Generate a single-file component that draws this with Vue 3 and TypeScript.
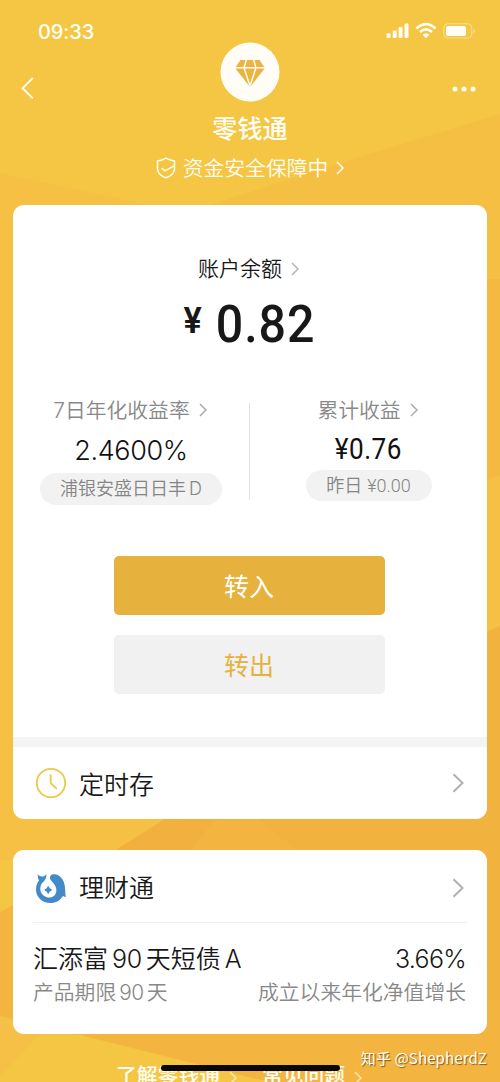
<script setup lang="ts">
interface FooterLink {
  label: string
  cls: string
}

const links: FooterLink[] = [
  { label: '了解零钱通', cls: 'about' },
  { label: '常见问题', cls: 'faq' },
]
</script>

<template>
  <div class="screen">
    <svg class="backdrop" viewBox="0 0 500 1082" aria-hidden="true">
      <rect width="500" height="1082" fill="#f5c644" />
      <path d="M0 173L130 201L250 225V860H0z" fill="#f5c044" />
      <path d="M500 114L350 160L225 200L150 225L250 400H500z" fill="#f4bf43" />
      <path d="M500 279H400V520L500 475z" fill="#f3b941" />
      <path d="M500 475L400 520V700H500z" fill="#f5c044" />
      <path d="M500 626L400 672L165 820L114 851L0 912V1016L80 1035L220 1070L270 1082H500z" fill="#f4b540" />
      <path d="M500 626L400 672L250 812L297 850L420 1000H500z" fill="#f1b23e" />
      <path d="M165 819H215L190 851H114z" fill="#f2b13e" />
      <path d="M0 1016L80 1035H39L0 1077z" fill="#f5c045" />
    </svg>

    <header class="status">
      <span class="time">09:33</span>
      <svg class="status-icons" viewBox="0 0 92 18" fill="#fffef6">
        <rect x="0.5" y="11.2" width="4" height="4.8" rx="1.2" />
        <rect x="6.7" y="8.5" width="4" height="7.5" rx="1.2" />
        <rect x="12.6" y="5" width="4" height="11" rx="1.2" />
        <rect x="18.5" y="1.5" width="4" height="14.5" rx="1.2" />
        <path d="M30.4 6.4Q40 -2.2 49.6 6.4" fill="none" stroke="#fffef6" stroke-width="2.7" />
        <path d="M34 10Q40 4.8 46 10" fill="none" stroke="#fffef6" stroke-width="2.6" />
        <path d="M36.6 12.8Q40 9.8 43.4 12.8L40 16.2z" />
        <rect x="57.8" y="1.8" width="28" height="14.2" rx="4" fill="none" stroke="#fffef6" stroke-opacity=".45" />
        <rect x="60" y="4" width="20" height="10" rx="2" />
        <path d="M87.5 6.5Q90.5 9 87.5 11.5z" opacity=".5" />
      </svg>
    </header>

    <nav class="nav">
      <svg class="back" viewBox="0 0 14 24"><path d="M12.8 2L2.6 12.2L12.8 22.4" /></svg>
      <div class="brand">
        <svg viewBox="0 0 60 60">
          <circle cx="30" cy="30" r="29.5" fill="#fffdf5" />
          <path d="M20.5 18H39.5L45 26L30 45L15 26z" fill="#e8b542" />
          <path d="M14 25.8H46M26.5 17.5L24 25.8L30 44M33.5 17.5L36 25.8L30 44" fill="none" stroke="#fffdf5" stroke-width="1.4" />
        </svg>
      </div>
      <svg class="more" viewBox="0 0 24 6"><circle cx="3" cy="3" r="2.5" /><circle cx="12" cy="3" r="2.5" /><circle cx="21" cy="3" r="2.5" /></svg>
    </nav>

    <h1 class="title">零钱通</h1>
    <div class="safe">
      <svg class="shield" viewBox="0 0 20 22">
        <path d="M10 1.2Q14 3.5 18.5 4V12Q18 18 10 20.8Q2 18 1.5 12V4Q6 3.5 10 1.2z" />
        <path d="M5.8 11.2L9 13.8L18 8.8" />
      </svg>
      <span>资金安全保障中</span>
      <svg class="chev" viewBox="0 0 8 14"><path d="M1 1L7 7L1 13" /></svg>
    </div>

    <main class="card account">
      <div class="balance-label"><span>账户余额</span><svg class="chev" viewBox="0 0 8 14"><path d="M1 1L7 7L1 13" /></svg></div>
      <div class="balance"><span class="yen">¥</span><span class="amount">0.82</span></div>
      <div class="stats">
        <section class="stat rate">
          <div class="stat-label"><span>7日年化收益率</span><svg class="chev" viewBox="0 0 8 14"><path d="M1 1L7 7L1 13" /></svg></div>
          <div class="stat-value">2.4600%</div>
          <div class="pill">浦银安盛日日丰<span class="suffix">D</span></div>
        </section>
        <div class="divider"></div>
        <section class="stat income">
          <div class="stat-label"><span>累计收益</span><svg class="chev" viewBox="0 0 8 14"><path d="M1 1L7 7L1 13" /></svg></div>
          <div class="stat-value">¥0.76</div>
          <div class="pill">昨日 <span class="num">¥0.00</span></div>
        </section>
      </div>
      <div class="actions">
        <button class="btn primary">转入</button>
        <button class="btn secondary">转出</button>
      </div>
      <div class="row timed">
        <svg class="row-icon" viewBox="0 0 32 32">
          <circle cx="16" cy="16" r="14.2" fill="none" stroke="#edc84b" stroke-width="1.8" />
          <path d="M15.7 7.5V16.2L21.8 21.8" fill="none" stroke="#edc84b" stroke-width="1.8" />
        </svg>
        <span>定时存</span>
        <svg class="arrow" viewBox="0 0 12 20"><path d="M1.5 1.2L10.5 10L1.5 18.8" /></svg>
      </div>
    </main>

    <section class="card wealth">
      <div class="row">
        <svg class="row-icon" viewBox="0 0 32 32">
          <path fill="#438bc8" d="M2.7 2.5C4.5 4 6.5 4.7 8 4.5C9.5 4.3 10.6 3.2 11.3 2C11.5 5 10.8 7.5 9 9.3C6.2 11.5 5 14.5 5.3 18C6 22.5 10.3 25.8 15 25.6C19.7 25 22 21 21.2 16.5C20.5 13 18 10.5 15.8 8.2C14.2 6.3 14.8 3.8 17 2.6C23 1 28 6 29.4 12C30.4 16 30 20 30.8 25.2L28 24C25 28.5 21 31 15.5 31C7 31 1 25 1 17.5C1 13.5 2.2 10.7 4 8.5C3 6.8 2.7 4.5 2.7 2.5z" />
          <path fill="#438bc8" d="M13.2 15Q13.8 17.4 16.2 18Q13.8 18.6 13.2 21Q12.6 18.6 10.2 18Q12.6 17.4 13.2 15z" stroke="#438bc8" stroke-width="1.4" stroke-linejoin="round" />
        </svg>
        <span>理财通</span>
        <svg class="arrow" viewBox="0 0 12 20"><path d="M1.5 1.2L10.5 10L1.5 18.8" /></svg>
      </div>
      <div class="fund main"><span class="fund-name">汇添富<i>90</i>天短债<i class="last">A</i></span><span class="pct">3.66%</span></div>
      <div class="fund sub"><span>产品期限<i>90</i>天</span><span>成立以来年化净值增长</span></div>
    </section>

    <footer class="footer">
      <span v-for="link in links" :key="link.cls" :class="['link', link.cls]">{{ link.label }}<svg class="chev" viewBox="0 0 8 14"><path d="M1 1L7 7L1 13" /></svg></span>
    </footer>
    <div class="home-bar"></div>
    <div class="watermark">知乎 @ShepherdZ</div>
  </div>
</template>

<style>
body { margin: 0; overflow: hidden; }
</style>

<style scoped>
* { box-sizing: border-box; }
.screen {
  position: relative;
  width: 500px;
  height: 1082px;
  overflow: hidden;
  display: flex;
  flex-direction: column;
  font-family: Inter, "Noto Sans CJK SC", sans-serif;
  font-weight: 350;
  color: #181818;
  isolation: isolate;
}
.backdrop { position: absolute; inset: 0; width: 500px; height: 1082px; z-index: -1; }
svg { display: block; flex: none; }
i { font-style: normal; }
.status { height: 42px; padding: 22px 22px 0 38px; display: flex; justify-content: space-between; }
.time { font: 500 20px/20px Inter, sans-serif; letter-spacing: -.1px; color: #fffef6; }
.status-icons { width: 92px; height: 18px; }
.nav { height: 61px; padding: 0 24px 0 20px; display: flex; justify-content: space-between; }
.back { width: 14px; height: 24px; margin-top: 34px; }
.back path { fill: none; stroke: #fffef6; stroke-width: 1.9; }
.brand svg { width: 60px; height: 60px; }
.brand { margin-left: 14px; }
.more { width: 24px; height: 6px; margin-top: 43.5px; fill: #fffef6; }
.title { margin: 0; height: 48px; text-align: center; font: 500 25px/48px "Noto Sans CJK SC", sans-serif; color: #fffef6; letter-spacing: .2px; }
.safe { height: 54px; display: flex; justify-content: center; font-size: 20.8px; line-height: 36px; color: #fffef6; }
.shield { width: 20px; height: 22px; margin: 6px 7px 0 0; }
.shield path { fill: none; stroke: #fffef6; stroke-width: 1.5; }
.chev { width: 8px; height: 14px; }
.chev path { fill: none; stroke: currentColor; stroke-width: 1.5; }
.safe .chev { margin: 10px 0 0 8px; }
.card { margin: 0 13px; background: #fff; border-radius: 11px; overflow: hidden; flex: none; }
.account { height: 614px; }
.balance-label { height: 84px; padding: 48px 3px 0 0; display: flex; justify-content: center; font-size: 21px; line-height: 32px; }
.balance-label .chev { color: #b3b3b3; margin: 9px 0 0 9px; }
.balance { height: 74px; display: flex; justify-content: center; font-family: Roboto, sans-serif; font-weight: 500; }
.yen { font-size: 36px; line-height: 36px; margin: 14px 9px 0 2px; font-weight: 600; transform: scaleX(.95); }
.amount { font-size: 52px; line-height: 71px; letter-spacing: 1px; transform: scaleX(.93); }
.stats { height: 193px; padding-top: 31px; display: flex; }
.stat { display: flex; flex-direction: column; align-items: center; }
.rate { width: 236px; height: 111px; }
.income { width: 237px; }
.divider { width: 1px; height: 97px; margin-top: 9px; background: #e2e2e2; }
.stat-label { display: flex; height: 34px; font-size: 20.8px; line-height: 34px; color: #888; padding-right: 2px; }
.stat-label .chev { margin: 9px 0 0 9px; color: #aaa; }
.stat-value { height: 45px; line-height: 46px; font-size: 27px; color: #111; letter-spacing: -.4px; }
.pill { height: 32px; line-height: 32px; border-radius: 16px; background: #f2f2f2; color: #858585; font-size: 18px; }
.rate .pill { width: 182px; padding-left: 20px; }
.suffix { margin-left: 3px; }
.income .stat-value { height: 42px; line-height: 43px; font-family: Roboto, sans-serif; font-size: 29px; font-weight: 400; letter-spacing: .6px; transform: scaleX(.9); }
.income .pill { width: 126px; height: 31px; line-height: 31px; text-align: center; }
.num { font-family: Roboto, sans-serif; }
.actions { height: 181px; padding-right: 1px; display: flex; flex-direction: column; align-items: center; gap: 20px; }
.btn { width: 271px; height: 59px; border: 0; border-radius: 5px; padding: 0 1px 0 0; font: 400 25px/59px "Noto Sans CJK SC", sans-serif; }
.primary { background: #e6b13c; color: #fff; }
.secondary { background: #f1f1f1; color: #e6b13c; }
.row { display: flex; align-items: center; height: 72px; padding: 0 23px 0 22px; font-size: 25px; }
.row > span { margin-left: 12px; flex: 1; }
.row-icon { width: 32px; height: 32px; }
.arrow { width: 12px; height: 20px; }
.arrow path { fill: none; stroke: #b0b0b0; stroke-width: 2; }
.timed { height: 82px; border-top: 10px solid #f4f4f4; }
.wealth { height: 184px; margin-top: 31px; }
.wealth .row { height: 73px; padding-top: 2px; margin-bottom: 20px; position: relative; }
.wealth .row > span { margin-top: -4px; }
.wealth .row::after { content: ""; position: absolute; left: 20px; right: 20px; bottom: 0; height: 1px; background: #efefef; }
.fund { display: flex; justify-content: space-between; padding: 0 21px 0 20px; }
.fund.main { height: 34px; font-size: 25px; line-height: 32px; }
.fund.main i { margin: 0 4px; letter-spacing: -.4px; }
.pct { letter-spacing: -.7px; }
.fund.sub { font-size: 20.8px; line-height: 31px; color: #888; }
.fund.sub i { margin: 0 3px; letter-spacing: -.4px; }
.footer { display: flex; margin: 25px 0 0 116px; color: #fffef6; font-size: 20.8px; line-height: 34px; font-weight: 500; height: 23px; }
.link { display: flex; }
.link .chev { margin: 12px 0 0 9px; opacity: .65; }
.faq { margin-left: 25px; }
.home-bar { position: absolute; left: 161px; top: 1065px; width: 179px; height: 6px; border-radius: 3px; background: #0b0906; }
.watermark { position: absolute; right: 13px; top: 1047px; font: 400 15px/22px "Noto Sans CJK SC", sans-serif; letter-spacing: .12px; color: #fffef6; text-shadow: 1px 1px 1px #7a5a20; white-space: nowrap; }
</style>
